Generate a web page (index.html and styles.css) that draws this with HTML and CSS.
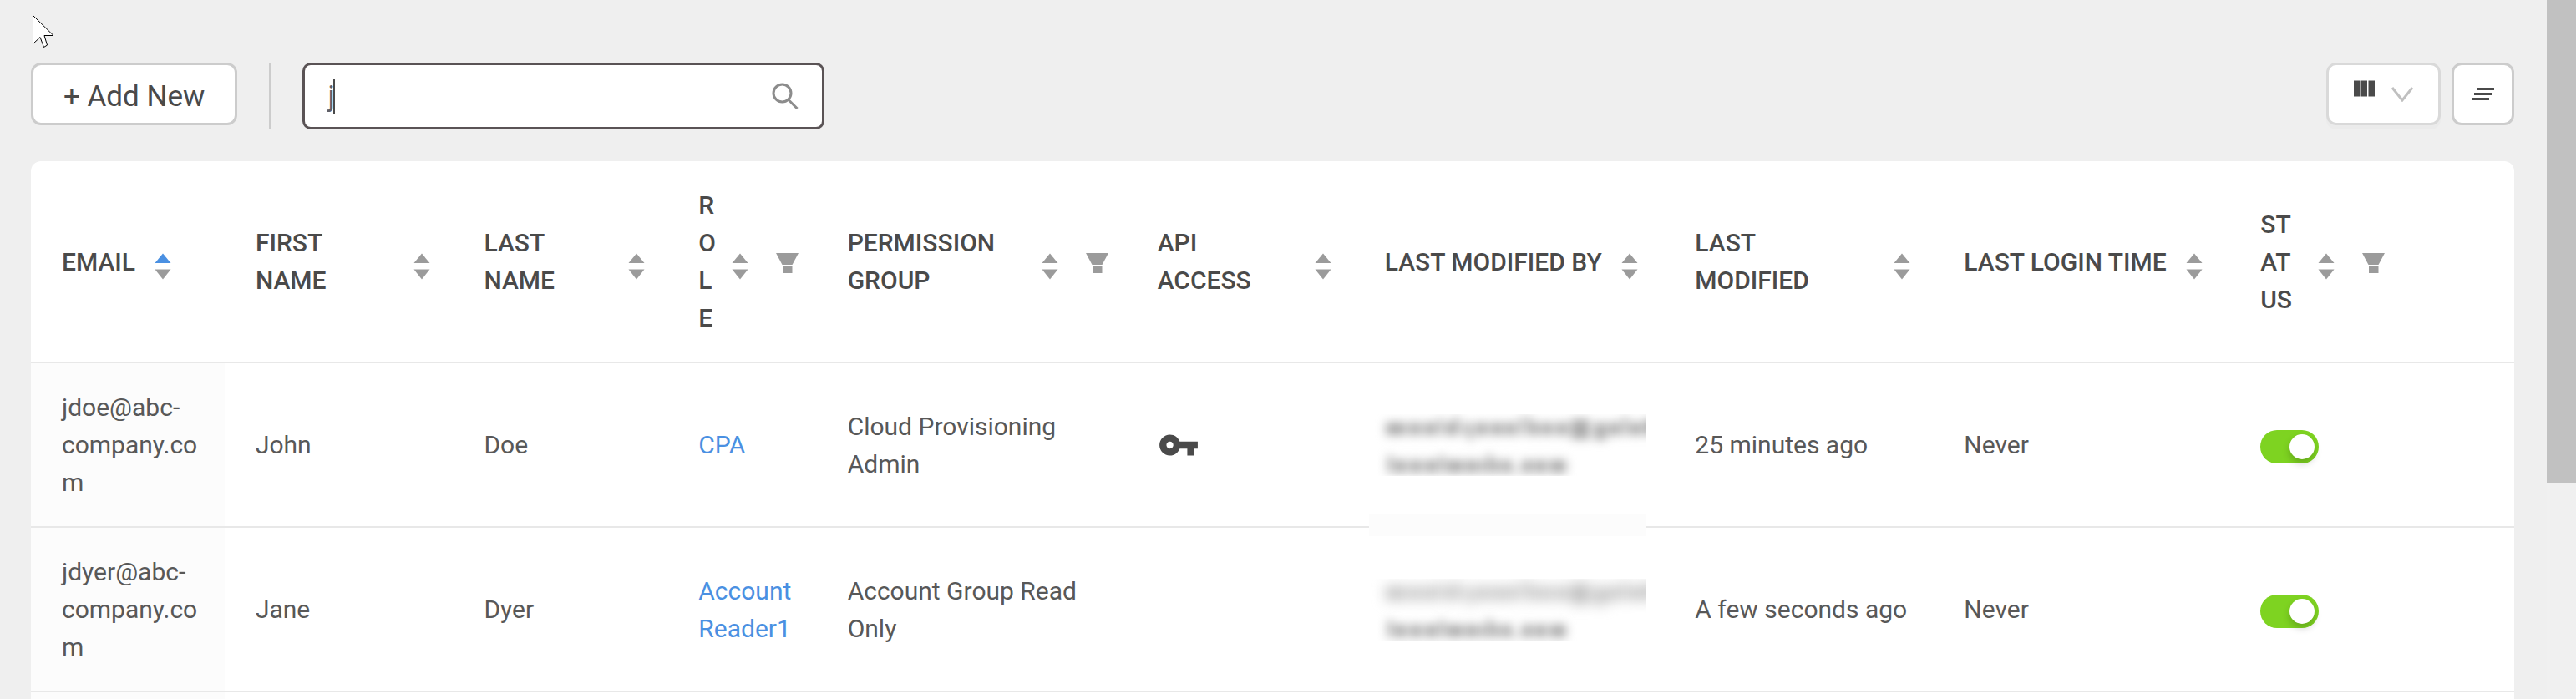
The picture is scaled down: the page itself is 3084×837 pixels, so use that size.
FILE: index.html
```html
<!DOCTYPE html>
<html lang="en">
<head>
<meta charset="utf-8">
<title>Users</title>
<link rel="stylesheet" href="styles.css">
</head>
<body>
<svg class="defs" aria-hidden="true">
  <symbol id="sort" viewBox="0 0 20 32"><path class="sort-up" d="M0.5 12 10 0.5 19.5 12z"/><path d="M0.5 19.5h19L10 31.5z"/></symbol>
  <symbol id="funnel" viewBox="0 0 27 24"><path d="M0 0h27l-7.500 14h-12z"/><path d="M8 16h11.500v8H8z"/></symbol>
  <symbol id="hidden-long" viewBox="0 0 330 64">
    <path d="M0 10h24v15H0zM28 10h14v15H28zM46 10h14v15H46zM63 5h5v20h-5zM72 10h10v15H72zM82 3h5v22h-5zM92 10h5v15h-5zM99 10h5v21h-5zM108 10h14v15h-14zM126 10h14v15h-14zM143 10h13v15h-13zM160 4h5v21h-5zM169 3h5v22h-5zM175 10h9v15h-9zM187 10h13v15h-13zM204 10h14v15h-14zM222 6h22v24h-22zM250 10h14v21h-14zM267 10h14v15h-14zM284 3h5v22h-5zM292 10h14v15h-14zM309 6h14v19h-14z"/>
  </symbol>
  <symbol id="hidden-short" viewBox="0 0 330 64">
    <path d="M2 5h6v20H2zM11 10h14v15H11zM29 10h14v15H29zM47 10h14v15H47zM64 5h6v20h-6zM73 10h20v15H73zM96 10h14v15H96zM113 10h7v15h-7zM122 3h5v22h-5zM128 10h8v15h-8zM139 10h12v15h-12zM154 21h5v4h-5zM163 10h12v15h-12zM178 10h14v15h-14zM196 10h20v15h-20z"/>
  </symbol>
</svg>

<div class="page">
  <main class="content">
    <div class="toolbar">
      <button class="btn btn-add" type="button">+ Add New</button>
      <span class="divider"></span>
      <div class="search">
        <input class="search-input" type="text" aria-label="Search" value="j">
        <span class="caret"></span>
        <svg class="search-icon" viewBox="0 0 32 32"><circle cx="12.500" cy="12.500" r="10.500"/><path d="M19.500 20 30.500 31"/></svg>
      </div>
      <div class="actions">
        <button class="btn btn-columns" type="button" aria-label="Columns">
          <svg class="icon-columns" viewBox="0 0 26 20"><path d="M1 0.500h7.500v19H1zM9.500 0.500H17v19H9.500zM18.500 0.500H26v19h-7.500z"/></svg>
          <svg class="icon-chevron" viewBox="0 0 26 18"><path d="M1 1 13 16 25 1"/></svg>
        </button>
        <button class="btn btn-lines" type="button" aria-label="Density">
          <svg class="icon-lines" viewBox="0 0 27 15"><path d="M6 0h21v3H6zM3 6h21v3H3zM0 12h21v3H0z"/></svg>
        </button>
      </div>
    </div>

    <table class="users">
      <colgroup>
        <col class="c-email"><col class="c-first"><col class="c-last"><col class="c-role"><col class="c-group"><col class="c-api"><col class="c-by"><col class="c-modified"><col class="c-login"><col class="c-status"><col>
      </colgroup>
      <thead>
        <tr>
          <th><div class="head"><span class="label">EMAIL</span><button class="sort asc" aria-label="Sort by email"><svg><use href="#sort"/></svg></button></div></th>
          <th><div class="head"><span class="label">FIRST NAME</span><button class="sort" aria-label="Sort by first name"><svg><use href="#sort"/></svg></button></div></th>
          <th><div class="head"><span class="label">LAST NAME</span><button class="sort" aria-label="Sort by last name"><svg><use href="#sort"/></svg></button></div></th>
          <th class="filterable"><div class="head"><span class="label">ROLE</span><button class="sort" aria-label="Sort by role"><svg><use href="#sort"/></svg></button><button class="filter" aria-label="Filter role"><svg><use href="#funnel"/></svg></button></div></th>
          <th class="filterable"><div class="head"><span class="label">PERMISSION GROUP</span><button class="sort" aria-label="Sort by permission group"><svg><use href="#sort"/></svg></button><button class="filter" aria-label="Filter permission group"><svg><use href="#funnel"/></svg></button></div></th>
          <th><div class="head"><span class="label">API ACCESS</span><button class="sort" aria-label="Sort by API access"><svg><use href="#sort"/></svg></button></div></th>
          <th><div class="head"><span class="label">LAST MODIFIED BY</span><button class="sort" aria-label="Sort by modifier"><svg><use href="#sort"/></svg></button></div></th>
          <th><div class="head"><span class="label">LAST MODIFIED</span><button class="sort" aria-label="Sort by last modified"><svg><use href="#sort"/></svg></button></div></th>
          <th><div class="head"><span class="label">LAST LOGIN TIME</span><button class="sort" aria-label="Sort by last login"><svg><use href="#sort"/></svg></button></div></th>
          <th class="filterable"><div class="head"><span class="label">STATUS</span><button class="sort" aria-label="Sort by status"><svg><use href="#sort"/></svg></button><button class="filter" aria-label="Filter status"><svg><use href="#funnel"/></svg></button></div></th>
          <th></th>
        </tr>
      </thead>
      <tbody>
        <tr>
          <td class="email">jdoe@abc-company.com</td>
          <td>John</td>
          <td>Doe</td>
          <td><a class="link" href="#cpa">CPA</a></td>
          <td>Cloud Provisioning Admin</td>
          <td><svg class="key" viewBox="0 0 24 24"><path d="M12.650 10C11.830 7.670 9.610 6 7 6c-3.310 0-6 2.690-6 6s2.690 6 6 6c2.610 0 4.830-1.670 5.650-4H17v4h4v-4h2v-4H12.650zM7 14c-1.100 0-2-.9-2-2s.9-2 2-2 2 .9 2 2-.9 2-2 2z"/></svg></td>
          <td class="redacted smudge"><div class="mask"><svg class="blur"><use href="#hidden-long"/></svg><svg class="blur"><use href="#hidden-short"/></svg></div></td>
          <td>25 minutes ago</td>
          <td>Never</td>
          <td><input class="toggle" type="checkbox" checked aria-label="John Doe enabled"></td>
          <td></td>
        </tr>
        <tr>
          <td class="email">jdyer@abc-company.com</td>
          <td>Jane</td>
          <td>Dyer</td>
          <td><a class="link" href="#reader">Account Reader1</a></td>
          <td>Account Group Read Only</td>
          <td></td>
          <td class="redacted"><div class="mask"><svg class="blur faint"><use href="#hidden-long"/></svg><svg class="blur"><use href="#hidden-short"/></svg></div></td>
          <td>A few seconds ago</td>
          <td>Never</td>
          <td><input class="toggle" type="checkbox" checked aria-label="Jane Dyer enabled"></td>
          <td></td>
        </tr>
        <tr>
          <td class="email"></td><td></td><td></td><td></td><td></td><td></td><td></td><td></td><td></td><td></td><td></td>
        </tr>
      </tbody>
    </table>
  </main>
  <div class="scrollbar"><div class="thumb"></div></div>
</div>

<svg class="pointer" viewBox="0 0 28 42" aria-hidden="true"><path d="M1.500 1.500V35.500L10 27.500 14.500 39.500 18.500 37 15 25.500H26z"/></svg>
</body>
</html>
```
FILE: styles.css
```css
* { box-sizing: border-box; }

body {
  margin: 0;
  background: #efefef;
  color: #585858;
  font: 400 30px/45px Roboto, "Liberation Sans", sans-serif;
  overflow: hidden;
}

button { font: inherit; color: inherit; padding: 0; border: 0; background: none; }
svg { display: block; }
.defs { position: absolute; width: 0; height: 0; }

.page { display: flex; height: 100vh; overflow: hidden; }
.content { flex: 1; min-width: 0; padding: 75px 39px 0 37px; }

.scrollbar { width: 35px; background: #f0f0f0; }
.thumb { height: 69%; background: #c1c1c1; }

/* Toolbar */
.toolbar { display: flex; align-items: flex-start; height: 80px; margin-bottom: 38px; }
.btn {
  height: 75px;
  background: #fff;
  border: 3px solid #ccc;
  border-radius: 12px;
  color: #4a4a4a;
  font-size: 35px;
}
.btn-add { padding: 5px 36px 0; }
.divider { width: 3px; height: 80px; margin: 0 37px 0 38px; background: #ccc; }

.search { position: relative; width: 625px; height: 80px; }
.search-input {
  width: 100%;
  height: 100%;
  padding: 0 80px 0 27px;
  border: 3px solid #5a5355;
  border-radius: 10px;
  background: #fff;
  color: #606068;
  font: inherit;
  font-size: 35px;
  outline: none;
}
.caret { position: absolute; left: 37px; top: 19px; width: 2px; height: 42px; background: #4a4a4a; }
.search-icon {
  position: absolute;
  right: 31px;
  top: 24px;
  width: 32px;
  height: 32px;
  fill: none;
  stroke: #8c8c8c;
  stroke-width: 3;
}

.actions { display: flex; gap: 13px; margin-left: auto; }
.btn-columns {
  display: flex;
  gap: 20px;
  width: 137px;
  padding: 18px 0 0 29px;
  border-color: #d9d9d9;
  box-shadow: 0 5px 0 #ebebeb;
}
.icon-columns { width: 26px; height: 20px; fill: #4a4a4a; }
.icon-chevron { width: 26px; height: 18px; margin-top: 8px; fill: none; stroke: #c0c0c0; stroke-width: 3; }
.btn-lines { display: flex; align-items: center; justify-content: center; width: 75px; }
.icon-lines { width: 27px; height: 15px; fill: #4a4a4a; }

/* Table */
.users {
  width: 100%;
  table-layout: fixed;
  border-spacing: 0;
  background: #fff;
  border-radius: 12px 12px 0 0;
}
.c-email { width: 7.8%; }
.c-first { width: 9.2%; }
.c-last { width: 8.64%; }
.c-role { width: 6%; }
.c-group { width: 12.48%; }
.c-api { width: 9.15%; }
.c-by { width: 12.5%; }
.c-modified { width: 10.83%; }
.c-login { width: 11.94%; }
.c-status { width: 7%; }

th {
  padding: 30px 27px 30px 37px;
  border-bottom: 2px solid #e8e8e8;
  color: #4a4a4a;
  font-weight: 500;
  text-align: left;
}
th.filterable { padding-right: 22px; }
td {
  height: 197px;
  padding: 30px 28px 30px 37px;
  border-bottom: 2px solid #e8e8e8;
  vertical-align: middle;
}
.email { background: #fcfcfc; overflow-wrap: anywhere; }

.head { display: flex; align-items: center; }
.label { min-width: 0; overflow-wrap: anywhere; }
.sort { flex: none; margin: 12px 0 0 23px; fill: #9b9b9b; }
.sort svg { width: 20px; height: 32px; }
.sort.asc { --up: #4a90e2; }
.sort-up { fill: var(--up, #9b9b9b); }
.filter { flex: none; margin: 4px 0 0 33px; fill: #9b9b9b; }
.filter svg { width: 27px; height: 24px; }

.link { color: #4a90e2; text-decoration: none; }
.key { width: 50px; height: 50px; fill: #4a4a4a; }

.toggle {
  appearance: none;
  display: block;
  width: 70px;
  height: 40px;
  margin: 4px 0 0;
  padding: 5px;
  border-radius: 20px;
  background: #7ed321;
}
.toggle::before {
  content: "";
  display: block;
  width: 30px;
  height: 30px;
  margin-left: auto;
  border-radius: 50%;
  background: #fff;
  box-shadow: 0 5px 10px rgba(0, 0, 0, 0.2);
}

/* Obscured addresses */
.redacted { position: relative; padding: 30px 21px 30px 18px; }
.mask { height: 74px; padding-left: 20px; overflow: hidden; }
.blur { width: 330px; height: 64px; margin-bottom: -19px; overflow: visible; fill: #aaa; filter: blur(6px); }
.faint { fill: #bbb; filter: blur(8px); }
.smudge::after {
  content: "";
  position: absolute;
  left: 18px;
  right: 21px;
  bottom: -12px;
  height: 26px;
  background: #fcfcfc;
}

.pointer { position: absolute; left: 38px; top: 17px; width: 28px; height: 42px; fill: #fff; stroke: #000; stroke-width: 1; }
```
